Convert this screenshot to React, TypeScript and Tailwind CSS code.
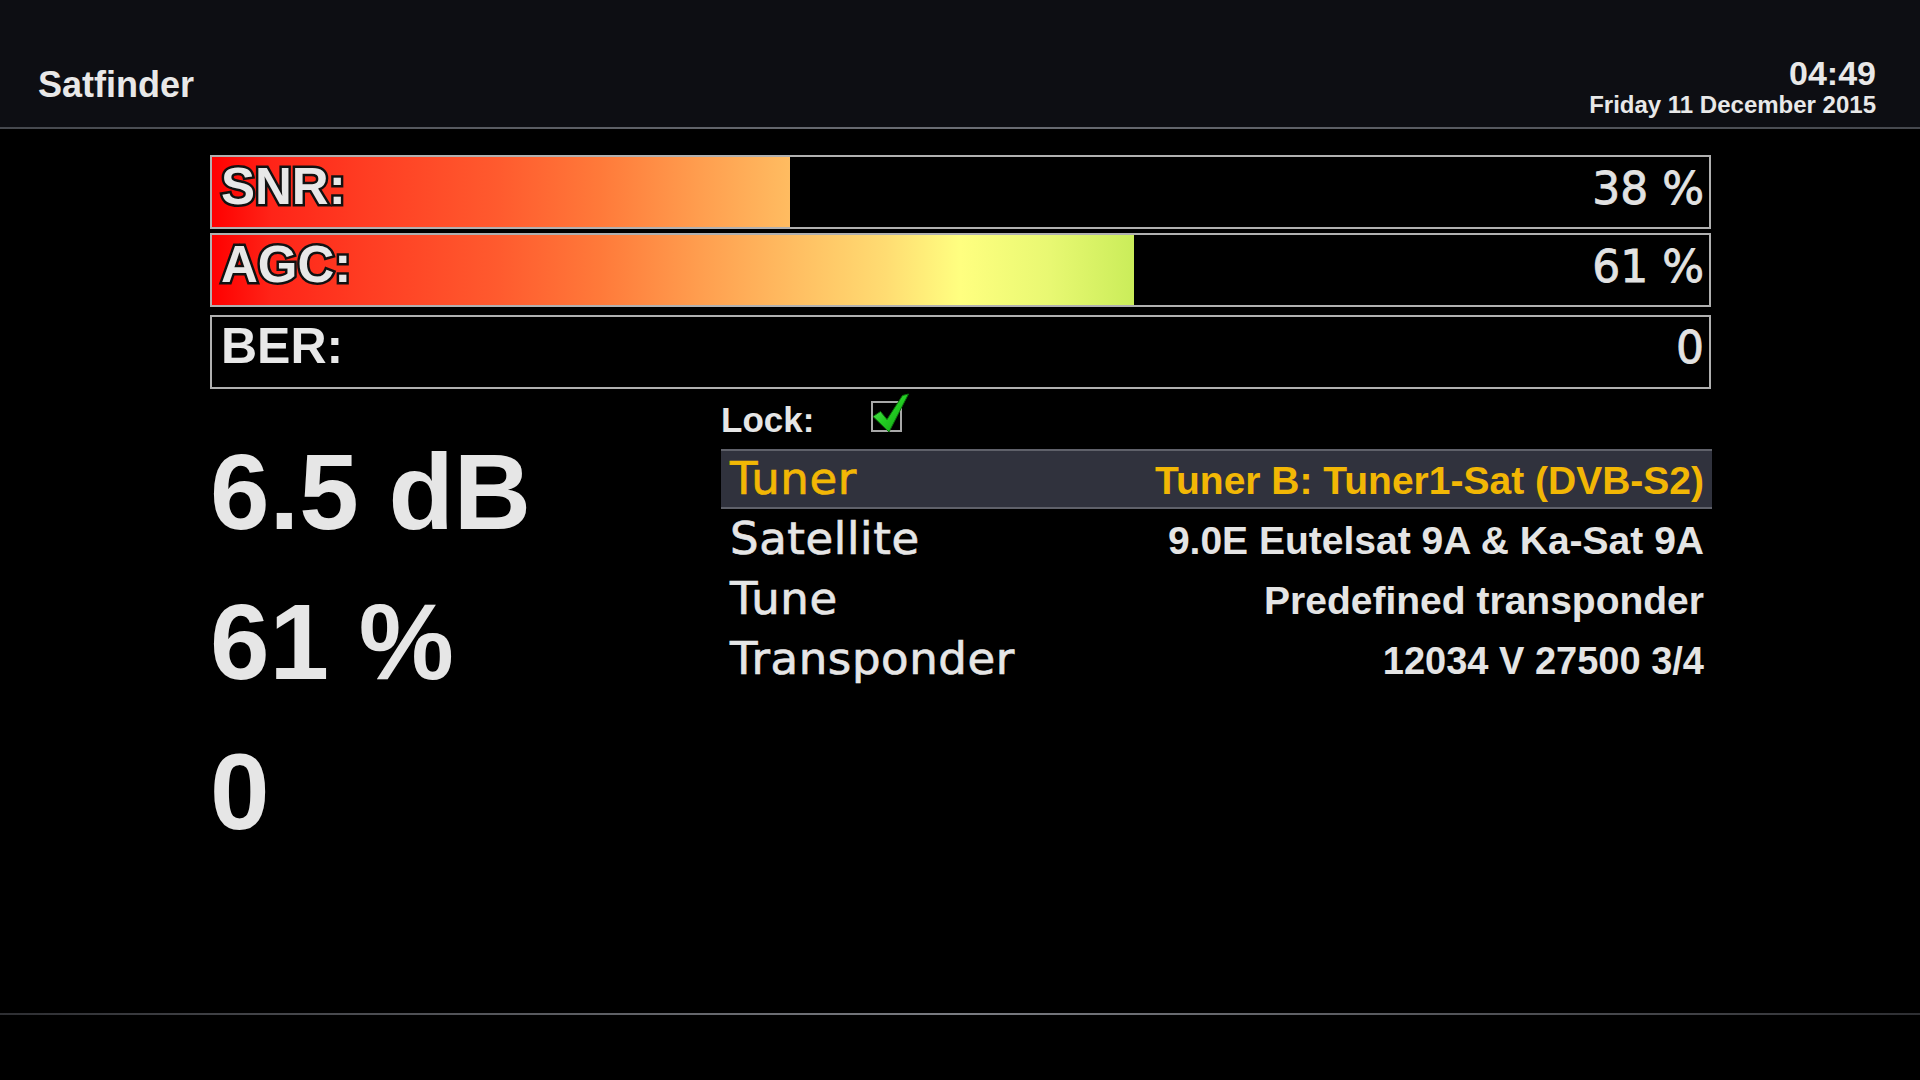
import React from "react";

const LIB = "font-['Liberation_Sans',Arial,sans-serif]";
const DJV = "font-['DejaVu_Sans','Liberation_Sans',sans-serif]";

function Bar({ label, value, pct, outlined }: { label: string; value: string; pct: number | null; outlined: boolean }) {
  return (
    <div className="relative h-[74px] border-2 border-[#b0b0b0] bg-black">
      {pct !== null && (
        <div
          className="absolute left-0 top-0 bottom-0 bg-[linear-gradient(90deg,#ff0000_0%,#ff2418_4%,#ff3c22_10%,#ff5a2e_19%,#ff7a3a_26%,#ffa050_33%,#ffbe62_39%,#ffdc72_45%,#ffff80_50%,#e8f872_56%,#c8ec58_62%,#40c030_100%)] bg-[length:1497px_100%] bg-no-repeat"
          style={{ width: `${pct}%` }}
        />
      )}
      <div className="relative flex items-baseline justify-between pl-[9px] pr-[5px] pt-[4px]">
        <span
          className={`${LIB} leading-none font-bold text-[#e8e8e8] ${
            outlined
              ? "text-[51px] [-webkit-text-stroke:5px_#111] [paint-order:stroke_fill]"
              : "text-[50px]"
          }`}
        >
          {label}
        </span>
        <span className={`${DJV} text-[44px] leading-none text-[#e2e2e2] [-webkit-text-stroke:0.8px_#e2e2e2]`}>{value}</span>
      </div>
    </div>
  );
}

function Row({ label, value, selected, small }: { label: string; value: string; selected?: boolean; small?: boolean }) {
  return (
    <div
      className={`flex h-[60px] items-baseline justify-between border-y-2 pl-[9px] pr-[8px] ${
        selected ? "border-[#5f616a] bg-[#30323d]" : "border-transparent"
      }`}
    >
      <span
        className={`${DJV} text-[45px] leading-[56px] tracking-[0.6px] ${
          selected
            ? "text-[#f2b705] [-webkit-text-stroke:0.7px_#f2b705]"
            : "text-[#e6e6e6] [-webkit-text-stroke:0.7px_#e6e6e6]"
        }`}
      >
        {label}
      </span>
      <span
        className={`${LIB} font-bold leading-[56px] ${small ? "text-[38px]" : "text-[39px]"} ${
          selected ? "text-[#f2b705]" : "text-[#e4e4e4]"
        }`}
      >
        {value}
      </span>
    </div>
  );
}

export default function App() {
  return (
    <div className="flex h-[1080px] w-[1920px] flex-col overflow-hidden bg-black">
      <header className="flex h-[127px] justify-between bg-[#0d0e13] pl-[38px] pr-[44px]">
        <div className={`${LIB} mb-[24px] self-end text-[36px] leading-none font-bold text-[#e8e8e8]`}>Satfinder</div>
        <div className={`${LIB} mb-[10px] flex flex-col items-end gap-[3px] self-end font-bold text-[#e8e8e8]`}>
          <div className="text-[34px] leading-none">04:49</div>
          <div className="text-[24px] leading-none">Friday 11 December 2015</div>
        </div>
      </header>
      <div className="h-[2px] bg-[linear-gradient(90deg,#45484e,#6a6d74_50%,#45484e)]" />

      <main className="flex-1">
        <div className="ml-[210px] mt-[26px] flex w-[1501px] flex-col">
          <Bar label="SNR:" value="38 %" pct={38.6} outlined />
          <div className="h-[4px]" />
          <Bar label="AGC:" value="61 %" pct={61.6} outlined />
          <div className="h-[8px]" />
          <Bar label="BER:" value="0" pct={null} outlined={false} />
        </div>

        <div className="ml-[210px] flex">
          <div className={`${LIB} w-[511px] pt-[28px] text-[107px] leading-[150px] font-bold text-[#e6e6e6]`}>
            <div>6.5 dB</div>
            <div>61 %</div>
            <div>0</div>
          </div>

          <div className="w-[991px]">
            <div className="flex h-[60px] items-start">
              <span className={`${LIB} mt-[13px] w-[150px] text-[35px] leading-none font-bold text-[#e6e6e6]`}>Lock:</span>
              <div className="relative mt-[12px] h-[31px] w-[31px] border-2 border-[#a8a8a8] bg-black">
                <svg className="absolute -left-[3px] -top-[10px] h-[42px] w-[40px] overflow-visible" viewBox="0 0 40 42">
                  <defs>
                    <linearGradient id="chk" x1="0" y1="0" x2="1" y2="1">
                      <stop offset="0" stopColor="#6ef06e" />
                      <stop offset="0.5" stopColor="#22cc22" />
                      <stop offset="1" stopColor="#129a12" />
                    </linearGradient>
                  </defs>
                  <path d="M3 23.5 L10.5 18.5 L17 26.5 L32.5 2.5 L38.5 1 L19 39 Z" fill="url(#chk)" stroke="#0c6e0c" strokeWidth="1" strokeLinejoin="round" />
                </svg>
              </div>
            </div>
            <Row label="Tuner" value="Tuner B: Tuner1-Sat (DVB-S2)" selected />
            <Row label="Satellite" value="9.0E Eutelsat 9A & Ka-Sat 9A" />
            <Row label="Tune" value="Predefined transponder" />
            <Row label="Transponder" value="12034 V 27500 3/4" small />
          </div>
        </div>
      </main>

      <div className="h-[2px] bg-[linear-gradient(90deg,#2e2f33,#7a7c82_50%,#2e2f33)]" />
      <div className="h-[65px] bg-black" />
    </div>
  );
}
